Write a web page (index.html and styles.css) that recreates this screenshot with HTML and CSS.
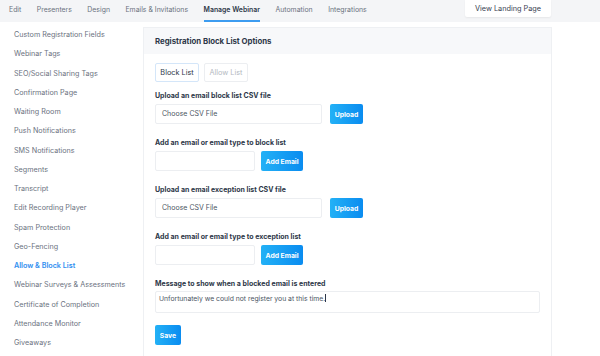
FILE: index.html
```html
<!DOCTYPE html>
<html lang="en">
  <head>
    <meta charset="UTF-8" />
    <title>Manage Webinar - Allow &amp; Block List</title>
    <link rel="stylesheet" href="styles.css">
  </head>
  <body>
    <header class="topbar">
      <nav class="tabs">
        <a href="#">Edit</a>
        <a href="#">Presenters</a>
        <a href="#">Design</a>
        <a href="#">Emails &amp; Invitations</a>
        <a href="#" class="active">Manage Webinar</a>
        <a href="#">Automation</a>
        <a href="#">Integrations</a>
      </nav>
      <a href="#" class="landing">View Landing Page</a>
    </header>

    <div class="layout">
      <ul class="sidebar">
        <li>Custom Registration Fields</li>
        <li>Webinar Tags</li>
        <li>SEO/Social Sharing Tags</li>
        <li>Confirmation Page</li>
        <li>Waiting Room</li>
        <li>Push Notifications</li>
        <li>SMS Notifications</li>
        <li>Segments</li>
        <li>Transcript</li>
        <li>Edit Recording Player</li>
        <li>Spam Protection</li>
        <li>Geo-Fencing</li>
        <li class="current">Allow &amp; Block List</li>
        <li>Webinar Surveys &amp; Assessments</li>
        <li>Certificate of Completion</li>
        <li>Attendance Monitor</li>
        <li>Giveaways</li>
      </ul>

      <section class="panel">
        <h2>Registration Block List Options</h2>
        <div class="panel_body">
          <div class="switch">
            <button class="on">Block List</button>
            <button>Allow List</button>
          </div>

          <div class="field">
            <label>Upload an email block list CSV file</label>
            <div class="row">
              <div class="input wide">Choose CSV File</div>
              <button class="blue upload">Upload</button>
            </div>
          </div>

          <div class="field">
            <label>Add an email or email type to block list</label>
            <div class="row">
              <div class="input short"></div>
              <button class="blue add">Add Email</button>
            </div>
          </div>

          <div class="field">
            <label>Upload an email exception list CSV file</label>
            <div class="row">
              <div class="input wide">Choose CSV File</div>
              <button class="blue upload">Upload</button>
            </div>
          </div>

          <div class="field">
            <label>Add an email or email type to exception list</label>
            <div class="row">
              <div class="input short"></div>
              <button class="blue add">Add Email</button>
            </div>
          </div>

          <div class="field last">
            <label>Message to show when a blocked email is entered</label>
            <div class="textarea">Unfortunately we could not register you at this time.<span class="caret"></span></div>
          </div>

          <button class="blue save">Save</button>
        </div>
      </section>
    </div>
  </body>
</html>
```

FILE: styles.css
```css
* {
  box-sizing: border-box;
}

body {
  margin: 0;
  font-family: Inter, "Noto Sans", sans-serif;
  background: white;
  color: #374151;
}

a {
  text-decoration: none;
}

button {
  font-family: Inter, "Noto Sans", sans-serif;
  cursor: pointer;
}

/* top navigation */
.topbar {
  height: 22px;
  background: #f4f5f7;
  display: flex;
  justify-content: space-between;
}
.tabs {
  display: flex;
  gap: 15.5px;
  padding-left: 9px;
}
.tabs a {
  font-size: 6.9px;
  line-height: 20px;
  color: #6b7280;
  border-bottom: 2px solid transparent;
}
.tabs a.active {
  color: #2d3748;
  font-weight: 600;
  border-bottom-color: #3d9cf0;
}
.landing {
  width: 86px;
  height: 17px;
  margin-right: 49px;
  background: white;
  box-shadow: 0 1px 2px rgba(0, 0, 0, 0.06);
  border-radius: 0 0 2px 2px;
  font-size: 7.3px;
  line-height: 17px;
  text-align: center;
  color: #374151;
}

/* page */
.layout {
  display: flex;
}
.sidebar {
  list-style: none;
  margin: 0;
  padding: 3px 0 0 14px;
  width: 143px;
}
.sidebar li {
  height: 19.25px;
  line-height: 19.25px;
  font-size: 7.2px;
  color: #6b7280;
}
.sidebar li.current {
  color: #2f8ef0;
  font-weight: 600;
}

.panel {
  margin-top: 5px;
  width: 409px;
  border: 1px solid #eef0f3;
  border-bottom: none;
}
.panel h2 {
  margin: 0;
  height: 26px;
  line-height: 26px;
  padding-left: 11px;
  background: #f7f8fa;
  font-size: 7.8px;
  font-weight: 700;
  color: #2d3748;
}
.panel_body {
  padding: 9px 11px 12px;
}

.switch {
  display: flex;
  gap: 5px;
  margin-bottom: 9px;
}
.switch button {
  width: 44px;
  height: 19px;
  padding: 0;
  background: white;
  border: 1px solid #eceef1;
  border-radius: 2px;
  font-size: 7.3px;
  color: #b4b9c2;
}
.switch button.on {
  border-color: #d4e6f9;
  color: #2d3748;
}

.field {
  margin-bottom: 14px;
}
.field.last {
  margin-bottom: 12px;
}
.field label {
  display: block;
  height: 10px;
  line-height: 10px;
  margin-bottom: 3px;
  font-size: 7px;
  font-weight: 700;
  color: #2d3748;
}
.row {
  display: flex;
}
.input {
  height: 20px;
  border: 1px solid #eceef1;
  border-radius: 2px;
  padding-left: 6px;
  line-height: 18px;
  font-size: 7px;
  color: #4b5563;
}
.input.wide {
  width: 167px;
  margin-right: 8px;
}
.input.short {
  width: 100px;
  margin-right: 6px;
}
.blue {
  height: 20px;
  padding: 0;
  border: none;
  border-radius: 2px;
  background: linear-gradient(90deg, #23b1f6, #0a8cf0);
  color: white;
  font-size: 6.8px;
  font-weight: 700;
}
.upload {
  width: 33px;
}
.add {
  width: 42px;
}
.save {
  width: 26px;
  display: block;
}
.field.last label {
  margin-bottom: 2px;
}
.textarea {
  width: 385px;
  height: 22px;
  border: 1px solid #eceef1;
  border-radius: 2px;
  padding: 2px 3px;
  font-size: 6.8px;
  line-height: 10px;
  color: #4b5563;
}
.caret {
  display: inline-block;
  width: 1px;
  height: 8px;
  background: #2d3748;
  vertical-align: -1px;
}
```
